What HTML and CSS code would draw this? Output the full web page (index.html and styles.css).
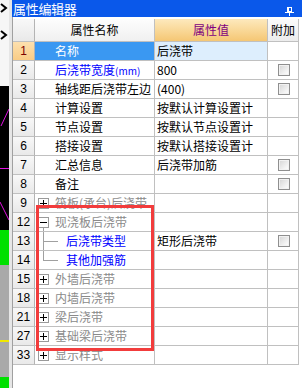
FILE: index.html
```html
<!DOCTYPE html>
<html>
<head>
<meta charset="utf-8">
<link rel="stylesheet" href="styles.css">
</head>
<body>
<div class="app">
  <div class="strip">
    <div class="s-top">
      <svg width="9" height="86" viewBox="0 0 9 86"><polyline points="1,4 6,8 1,12" fill="none" stroke="#000" stroke-width="2"/><polyline points="1,31 6,35 1,39" fill="none" stroke="#000" stroke-width="2"/></svg>
    </div>
    <div class="s-black">
      <svg width="9" height="144" viewBox="0 0 9 144"><line x1="1" y1="40" x2="9" y2="23" stroke="#e010e0" stroke-width="1"/><line x1="0" y1="82.5" x2="9" y2="82.5" stroke="#e010e0" stroke-width="1"/><line x1="0" y1="116" x2="9" y2="134" stroke="#e010e0" stroke-width="1"/></svg>
    </div>
    <div class="s-green"></div>
    <div class="s-gray"></div>
    <div class="s-green2"></div>
  </div>
  <div class="sep"></div>
  <div class="panel">
    <div class="title">
      <span class="title-text">属性编辑器</span>
      <svg class="pin" width="9" height="9" viewBox="0 0 9 9"><rect x="2.5" y="0.5" width="4" height="4" fill="none" stroke="#fff"/><rect x="3" y="0" width="1" height="5" fill="#fff"/><line x1="0" y1="5.5" x2="9" y2="5.5" stroke="#fff"/><line x1="4.5" y1="6" x2="4.5" y2="9" stroke="#fff"/></svg>
    </div>
    <div class="body">
      <div class="grid">
        <div class="row head">
          <div class="c num"></div>
          <div class="c name hname">属性名称</div>
          <div class="c val hval">属性值</div>
          <div class="c att hatt">附加</div>
        </div>
        <div class="row">
          <div class="c num sel">1</div>
          <div class="c name selname">名称</div>
          <div class="c val selval">后浇带</div>
          <div class="c att"></div>
        </div>
        <div class="row">
          <div class="c num">2</div>
          <div class="c name blue">后浇带宽度<span class="unit">(mm)</span></div>
          <div class="c val">800</div>
          <div class="c att"><span class="cb"></span></div>
        </div>
        <div class="row">
          <div class="c num">3</div>
          <div class="c name">轴线距后浇带左边</div>
          <div class="c val">(400)</div>
          <div class="c att"><span class="cb"></span></div>
        </div>
        <div class="row">
          <div class="c num">4</div>
          <div class="c name">计算设置</div>
          <div class="c val">按默认计算设置计</div>
          <div class="c att"></div>
        </div>
        <div class="row">
          <div class="c num">5</div>
          <div class="c name">节点设置</div>
          <div class="c val">按默认节点设置计</div>
          <div class="c att"></div>
        </div>
        <div class="row">
          <div class="c num">6</div>
          <div class="c name">搭接设置</div>
          <div class="c val">按默认搭接设置计</div>
          <div class="c att"></div>
        </div>
        <div class="row">
          <div class="c num">7</div>
          <div class="c name">汇总信息</div>
          <div class="c val">后浇带加筋</div>
          <div class="c att"><span class="cb"></span></div>
        </div>
        <div class="row">
          <div class="c num">8</div>
          <div class="c name">备注</div>
          <div class="c val"></div>
          <div class="c att"><span class="cb"></span></div>
        </div>
        <div class="row">
          <div class="c num">9</div>
          <div class="c name tree"><span class="tb plus"></span><span class="tt">筏板(承台)后浇带</span></div>
          <div class="c val"></div>
          <div class="c att"></div>
        </div>
        <div class="row">
          <div class="c num">12</div>
          <div class="c name tree open"><span class="tb"></span><span class="tt">现浇板后浇带</span></div>
          <div class="c val"></div>
          <div class="c att"></div>
        </div>
        <div class="row">
          <div class="c num">13</div>
          <div class="c name child"><span class="br br-mid"></span><span class="blue">后浇带类型</span></div>
          <div class="c val">矩形后浇带</div>
          <div class="c att"><span class="cb"></span></div>
        </div>
        <div class="row">
          <div class="c num">14</div>
          <div class="c name child"><span class="br br-end"></span><span class="blue">其他加强筋</span></div>
          <div class="c val"></div>
          <div class="c att"></div>
        </div>
        <div class="row">
          <div class="c num">15</div>
          <div class="c name tree"><span class="tb plus"></span><span class="tt">外墙后浇带</span></div>
          <div class="c val"></div>
          <div class="c att"></div>
        </div>
        <div class="row">
          <div class="c num">18</div>
          <div class="c name tree"><span class="tb plus"></span><span class="tt">内墙后浇带</span></div>
          <div class="c val"></div>
          <div class="c att"></div>
        </div>
        <div class="row">
          <div class="c num">21</div>
          <div class="c name tree"><span class="tb plus"></span><span class="tt">梁后浇带</span></div>
          <div class="c val"></div>
          <div class="c att"></div>
        </div>
        <div class="row">
          <div class="c num">27</div>
          <div class="c name tree"><span class="tb plus"></span><span class="tt">基础梁后浇带</span></div>
          <div class="c val"></div>
          <div class="c att"></div>
        </div>
        <div class="row">
          <div class="c num">33</div>
          <div class="c name tree"><span class="tb plus"></span><span class="tt">显示样式</span></div>
          <div class="c val"></div>
          <div class="c att"></div>
        </div>
      </div>
    </div>
  </div>
</div>
<div class="mark"></div>
</body>
</html>
```
FILE: styles.css
```css
html, body {
  margin: 0;
  padding: 0;
}
body {
  width: 302px;
  height: 388px;
  overflow: hidden;
  position: relative;
  background: #fff;
  font-family: "Noto Sans CJK SC", sans-serif;
  font-size: 12px;
  color: #000;
}
.app {
  display: flex;
  height: 388px;
}
.strip {
  width: 9px;
  display: flex;
  flex-direction: column;
}
.strip svg { display: block; }
.s-top { height: 86px; background: #f6f6f6; }
.s-black { height: 144px; background: #000; }
.s-green { height: 35px; background: #00e000; }
.s-gray {
  height: 112px;
  background: linear-gradient(#f0e800, #f0e800) 0 75px / 100% 2px no-repeat, #a9a9a9;
}
.s-green2 { flex: 1; background: #00e000; }
.sep {
  width: 3px;
  background: #e6e6e6;
}
.panel {
  width: 290px;
  display: flex;
  flex-direction: column;
}
.title {
  height: 17px;
  background: #0a58ea;
  color: #fff;
  display: flex;
  align-items: center;
  justify-content: space-between;
  padding-right: 8px;
}
.title-text {
  font-size: 13px;
  line-height: 17px;
  letter-spacing: -0.3px;
  padding-left: 1px;
}
.pin { display: block; margin-top: 6px; }
.body {
  flex: 1;
  border-left: 1px solid #a0a0a0;
  padding-top: 2px;
  background: #fff;
}
.grid {
  width: 286px;
}
.row {
  display: grid;
  grid-template-columns: 22px 120px 113px 31px;
  height: 19px;
}
.row.head { height: 23px; }
.c {
  box-sizing: border-box;
  border-right: 1px solid #c0c0c0;
  border-bottom: 1px solid #c0c0c0;
  overflow: hidden;
  white-space: nowrap;
  line-height: 18px;
}
.head .c { line-height: 22px; }
.num {
  text-align: center;
  font-family: "Liberation Sans", sans-serif;
  font-size: 12px;
  background: linear-gradient(#f8f8f8, #e9e9e9);
  border-right-color: #b4b4b4;
}
.num.sel {
  background: linear-gradient(#fde0ae, #f9cc86);
  color: #7a0000;
}
.name { padding-left: 20px; }
.val { padding-left: 2px; }
.unit { font-size: 10px; }
.hname {
  padding-left: 0;
  text-align: center;
  background: linear-gradient(#fdfdfd, #f0f0f0);
}
.hval {
  padding-left: 0;
  text-align: center;
  color: #800080;
  background: linear-gradient(#fde9bd, #f5c774);
}
.hatt {
  text-align: center;
  background: linear-gradient(#fbfbfb, #ececec);
}
.selname { background: #3a98f2; color: #fff; }
.selval { background: #ddeefd; }
.blue { color: #0000ff; }
.att {
  display: flex;
  align-items: center;
  justify-content: center;
}
.cb {
  width: 12px;
  height: 12px;
  box-sizing: border-box;
  border: 1px solid #8f8f8f;
  background: linear-gradient(135deg, #d4d4d4, #f4f4f4 70%, #fff);
  box-shadow: inset 0 0 0 1px #f2f2f2;
  margin-left: 1px;
}
.tree {
  padding-left: 3px;
  display: flex;
  align-items: center;
  color: #8a8a8a;
}
.tree.open {
  background: linear-gradient(#a0a0a0, #a0a0a0) 8px 15px / 1px 4px no-repeat;
}
.tb {
  width: 9px;
  height: 9px;
  border: 1px solid #9a9a9a;
  background: linear-gradient(#000, #000) center / 7px 1px no-repeat, #fff;
  flex: none;
}
.tb.plus {
  background: linear-gradient(#000, #000) center / 7px 1px no-repeat,
              linear-gradient(#000, #000) center / 1px 7px no-repeat, #fff;
}
.tt { margin-left: 6px; }
.child {
  padding-left: 0;
  display: flex;
  align-items: center;
}
.br {
  width: 31px;
  height: 18px;
  flex: none;
}
.br-mid {
  background: linear-gradient(#a0a0a0, #a0a0a0) 8px 0 / 1px 18px no-repeat,
              linear-gradient(#a0a0a0, #a0a0a0) 8px 9px / 15px 1px no-repeat;
}
.br-end {
  background: linear-gradient(#a0a0a0, #a0a0a0) 8px 0 / 1px 10px no-repeat,
              linear-gradient(#a0a0a0, #a0a0a0) 8px 9px / 15px 1px no-repeat;
}
.mark {
  position: absolute;
  left: 36px;
  top: 205px;
  width: 118px;
  height: 146px;
  box-sizing: border-box;
  border: 3px solid #f23c3c;
}
```
